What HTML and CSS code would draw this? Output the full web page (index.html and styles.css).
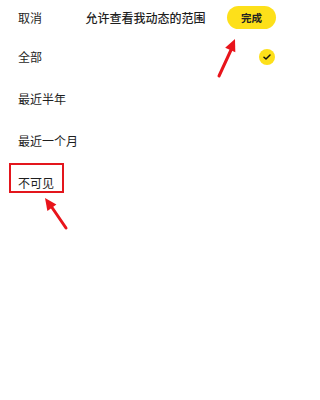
FILE: index.html
```html
<!DOCTYPE html>
<html lang="zh">
<head>
<meta charset="utf-8">
<link rel="stylesheet" href="styles.css">
</head>
<body>
<div class="page">
  <header class="header">
    <span class="cancel">取消</span>
    <span class="title">允许查看我动态的范围</span>
    <span class="done">完成</span>
  </header>
  <ul class="list">
    <li class="row">
      <span>全部</span>
      <span class="check">
        <svg width="8" height="6" viewBox="0 0 8 6"><path d="M1 3.2 L3 5 L7 1" fill="none" stroke="#111" stroke-width="1.5" stroke-linecap="round" stroke-linejoin="round"/></svg>
      </span>
    </li>
    <li class="row"><span>最近半年</span></li>
    <li class="row"><span>最近一个月</span></li>
    <li class="row"><span>不可见</span></li>
  </ul>
  <div class="mark"></div>
  <svg class="arrows" width="300" height="400" viewBox="0 0 300 400">
    <line x1="219" y1="76" x2="231" y2="50" stroke="#e8141b" stroke-width="3" stroke-linecap="round"/>
    <polygon points="235,39 235.3,52.2 225.2,47.8" fill="#e8141b"/>
    <line x1="66" y1="228" x2="51" y2="206" stroke="#e8141b" stroke-width="3" stroke-linecap="round"/>
    <polygon points="45,198 56.4,204.6 47.4,211" fill="#e8141b"/>
  </svg>
</div>
</body>
</html>
```
FILE: styles.css
```css
html, body {
  margin: 0;
  padding: 0;
  background: #fff;
}
body {
  font-family: "Noto Sans CJK SC", "Noto Sans", sans-serif;
  color: #1e1e1e;
  font-size: 12px;
}
.page {
  position: relative;
  width: 300px;
  height: 400px;
  overflow: hidden;
}
.header {
  height: 36px;
  display: flex;
  align-items: center;
  padding: 0 24px 4px 18px;
  box-sizing: border-box;
  padding-top: 3px;
}
.cancel {
  line-height: 1;
}
.title {
  flex: 1;
  text-align: center;
  padding-left: 22px;
  font-weight: 500;
  line-height: 1;
}
.done {
  width: 49px;
  height: 23px;
  border-radius: 12px;
  background: #fde01a;
  display: flex;
  align-items: center;
  justify-content: center;
  font-size: 10.5px;
  font-weight: 700;
  color: #222;
}
.list {
  list-style: none;
  margin: 0;
  padding: 0;
}
.row {
  height: 42px;
  display: flex;
  align-items: center;
  justify-content: space-between;
  padding: 0 25px 0 18px;
  line-height: 1;
}
.check {
  width: 16px;
  height: 16px;
  border-radius: 50%;
  background: #fde01a;
  display: flex;
  align-items: center;
  justify-content: center;
}
.mark {
  position: absolute;
  left: 9px;
  top: 163px;
  width: 55px;
  height: 30px;
  border: 2px solid #e3161d;
  box-sizing: border-box;
}
.arrows {
  position: absolute;
  left: 0;
  top: 0;
  pointer-events: none;
}
```
